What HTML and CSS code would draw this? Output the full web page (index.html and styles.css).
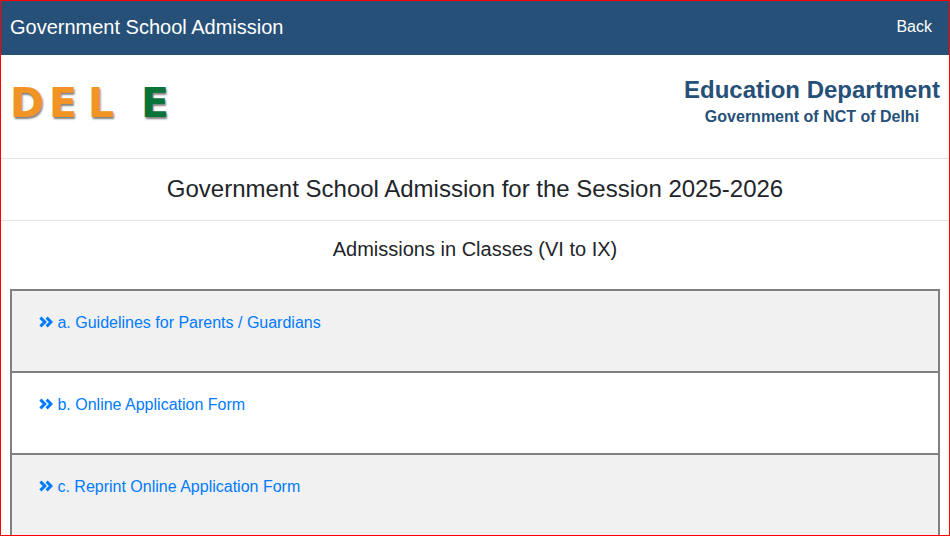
FILE: index.html
```html
<!DOCTYPE html>
<html lang="en">
<head>
    <meta charset="UTF-8">
    <meta name="viewport" content="width=device-width, initial-scale=1.0">
    <title>Government School Admission</title>
    <link rel="stylesheet" href="styles.css">
</head>
<body>
    <!-- arrow icon shared by all the menu links -->
    <svg class="icon-defs" aria-hidden="true">
        <symbol id="angles-right" viewBox="0 0 14 12">
            <path d="M1.4 1.6 5.8 6 1.4 10.4M7.6 1.6 12 6 7.6 10.4" fill="none" stroke="currentColor" stroke-width="3"/>
        </symbol>
    </svg>

    <div class="page">
        <nav class="navbar">
            <span class="navbar-brand">Government School Admission</span>
            <a class="navbar-link" href="#">Back</a>
        </nav>

        <header class="header">
            <div class="logo">
                <span>D</span><span>E</span><span>L</span><span class="logo-green">E</span>
            </div>
            <div class="department">
                <div class="department-name">Education Department</div>
                <div class="department-govt">Government of NCT of Delhi</div>
            </div>
        </header>

        <h1 class="session-title">Government School Admission for the Session 2025-2026</h1>
        <h2 class="class-title">Admissions in Classes (VI to IX)</h2>

        <main class="content">
            <table class="menu-table">
                <tbody>
                    <tr>
                        <td><a href="#"><svg class="icon" aria-hidden="true"><use href="#angles-right"/></svg> a. Guidelines for Parents / Guardians</a></td>
                    </tr>
                    <tr>
                        <td><a href="#"><svg class="icon" aria-hidden="true"><use href="#angles-right"/></svg> b. Online Application Form</a></td>
                    </tr>
                    <tr>
                        <td><a href="#"><svg class="icon" aria-hidden="true"><use href="#angles-right"/></svg> c. Reprint Online Application Form</a></td>
                    </tr>
                </tbody>
            </table>
        </main>
    </div>
</body>
</html>
```

FILE: styles.css
```css
* {
    box-sizing: border-box;
}

body {
    margin: 0;
    font-family: "Liberation Sans", Arial, sans-serif;
    font-size: 16px;
    line-height: 24px;
    color: #212529;
    background-color: #fff;
}

a {
    color: #007bff;
    text-decoration: none;
}

.icon-defs {
    display: none;
}

.page {
    height: 100vh;
    overflow: hidden;
    border: 1px solid red;
}

.navbar {
    display: flex;
    justify-content: space-between;
    align-items: center;
    padding: 11px 17px 13px 9px;
    background-color: #265077;
}

.navbar-brand {
    font-size: 20px;
    line-height: 30px;
    color: #fff;
}

.navbar-link {
    color: #fff;
}

.header {
    display: flex;
    justify-content: space-between;
    align-items: flex-start;
    padding: 20px 9px 29px;
}

/* Logo */
.logo {
    display: grid;
    grid-template-columns: 39px 39px 53px 39px;
    padding-top: 4px;
    font-family: "DejaVu Sans", sans-serif;
    font-size: 41px;
    font-weight: bold;
    line-height: 48px;
    color: #f29325;
    text-shadow: 1px 2px 2px rgba(0, 0, 0, 0.5);
}

.logo-green {
    color: #0a733a;
}

.department {
    font-weight: bold;
    text-align: center;
    color: #265077;
}

.department-name {
    font-size: 24px;
    line-height: 30px;
}

.session-title,
.class-title {
    margin: 0;
    border-top: 1px solid #e5e5e5;
    font-weight: normal;
    text-align: center;
}

.session-title {
    padding: 14px 0 16px;
    font-size: 24px;
    line-height: 31px;
}

.class-title {
    padding: 16px 0 28px;
    font-size: 20px;
    line-height: 24px;
}

.content {
    padding: 0 9px;
}

/* Menu table */
.menu-table {
    width: 100%;
    border-collapse: collapse;
}

.menu-table td {
    height: 82px;
    padding: 20px 27px;
    border: 2px solid #808080;
    vertical-align: top;
}

.menu-table tr:nth-child(odd) {
    background-color: #f1f1f1;
}

.icon {
    width: 14px;
    height: 12px;
}
```
